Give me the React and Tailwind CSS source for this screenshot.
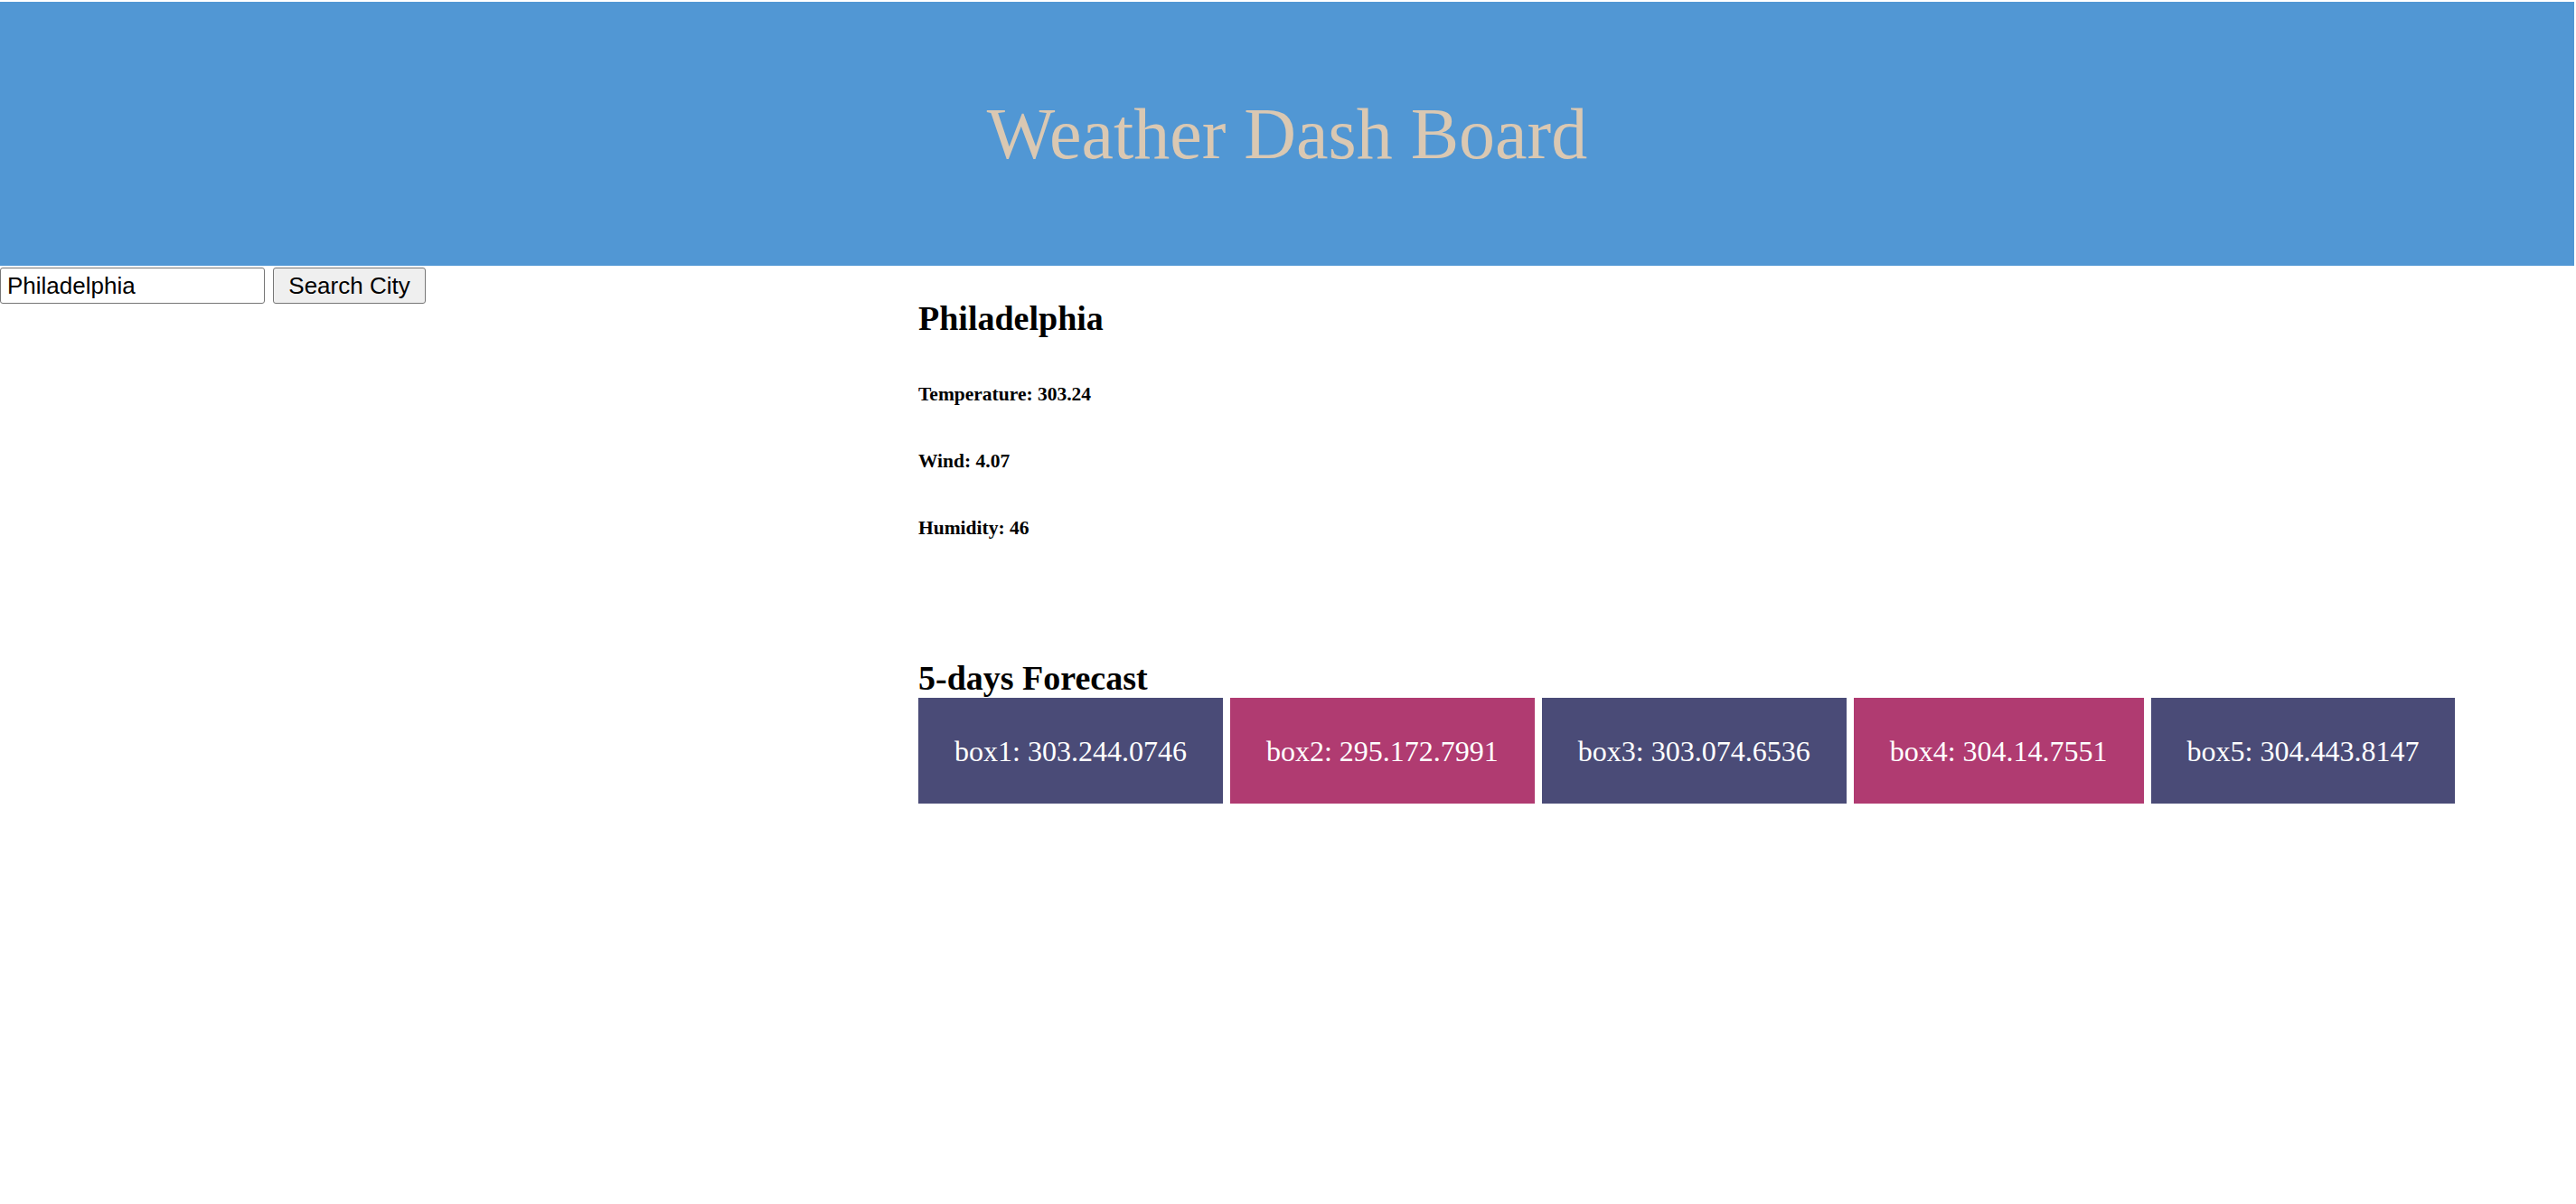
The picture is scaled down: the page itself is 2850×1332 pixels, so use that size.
import React from 'react';

const forecast = [
  { label: 'box1: 303.244.0746', tone: 'bg-[#4a4b77]' },
  { label: 'box2: 295.172.7991', tone: 'bg-[#b03b71]' },
  { label: 'box3: 303.074.6536', tone: 'bg-[#4a4b77]' },
  { label: 'box4: 304.14.7551', tone: 'bg-[#b03b71]' },
  { label: 'box5: 304.443.8147', tone: 'bg-[#4a4b77]' },
];

const App = () => {
  return (
    <div className="min-h-screen bg-white font-['Liberation_Serif',serif] text-black">
      <header className="mt-[2px] mr-[2px] h-[292px] bg-[#5197d4] flex items-center justify-center">
        <h1 className="text-[80px] leading-none font-normal text-[#dac8b2]">Weather Dash Board</h1>
      </header>

      <div className="flex">
        <aside className="w-[1016px] shrink-0 pt-[2px]">
          <form className="flex items-center gap-[9px]" onSubmit={(e) => e.preventDefault()}>
            <input
              type="text"
              defaultValue="Philadelphia"
              className="w-[293px] h-[40px] px-[7px] border-[1.5px] border-[#767676] rounded-[3px] font-['Liberation_Sans',sans-serif] text-[26px] text-black"
            />
            <button
              type="submit"
              className="w-[169px] h-[40px] bg-[#efefef] border-[1.5px] border-[#767676] rounded-[3px] font-['Liberation_Sans',sans-serif] text-[26px] text-black"
            >
              Search City
            </button>
          </form>
        </aside>

        <main className="flex-1 pt-[36px]">
          <h2 className="text-[38px] leading-[44px] font-bold">Philadelphia</h2>
          <div className="mt-[50px] flex flex-col gap-[50px]">
            <h5 className="text-[21.5px] leading-[24px] font-bold">Temperature: 303.24</h5>
            <h5 className="text-[21.5px] leading-[24px] font-bold">Wind: 4.07</h5>
            <h5 className="text-[21.5px] leading-[24px] font-bold">Humidity: 46</h5>
          </div>

          <h2 className="mt-[132px] text-[38px] leading-[44px] font-bold">5-days Forecast</h2>
          <div className="flex gap-[8px]">
            {forecast.map((day) => (
              <div
                key={day.label}
                className={`${day.tone} h-[117px] px-[40px] flex items-center justify-center text-white text-[32px] whitespace-nowrap`}
              >
                {day.label}
              </div>
            ))}
          </div>
        </main>
      </div>
    </div>
  );
};

export default App;
